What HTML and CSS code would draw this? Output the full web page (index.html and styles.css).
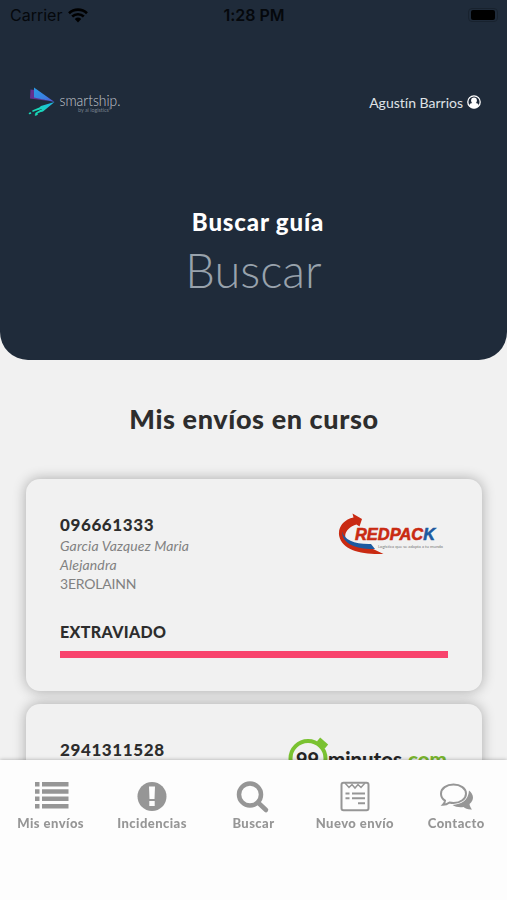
FILE: index.html
```html
<!DOCTYPE html>
<html lang="es">
  <head>
    <meta charset="UTF-8" />
    <meta name="viewport" content="width=device-width, initial-scale=1" />
    <title>Smartship</title>
    <link rel="stylesheet" href="styles.css">
  </head>
  <body>
    <header class="header">
      <div class="status-bar">
        <div class="carrier">
          <span>Carrier</span>
          <svg class="wifi" viewBox="0 0 20 15">
            <path d="M1 5.2a13 13 0 0 1 18 0" />
            <path d="M4.2 8.5a8.4 8.4 0 0 1 11.6 0" />
            <path class="wifi-dot" d="M6.8 11.1a4.7 4.7 0 0 1 6.4 0L10 14.4z" />
          </svg>
        </div>
        <span class="time">1:28 PM</span>
        <div class="battery"><span></span></div>
      </div>

      <div class="top-bar">
        <svg class="logo" viewBox="0 0 96 32">
          <defs>
            <linearGradient id="wing" x1="0" y1="0" x2="1" y2="1">
              <stop offset="0" stop-color="#2a9be6" />
              <stop offset="0.6" stop-color="#3b7fe0" />
              <stop offset="1" stop-color="#5a4fd0" />
            </linearGradient>
            <linearGradient id="tail" x1="0" y1="1" x2="1" y2="0">
              <stop offset="0" stop-color="#19e0b0" />
              <stop offset="1" stop-color="#1fb4ea" />
            </linearGradient>
          </defs>
          <path fill="#64308f" d="M3.5 3.5L8 4v7l14 4-19-2.5z" />
          <path fill="url(#wing)" d="M7 1.5L27.5 16 7 11.5z" />
          <path fill="url(#tail)" d="M27.5 16L16 25.5l-4 1 3-3.5-6 1.500 5-4.500z" />
          <path class="logo-trail" d="M12 22.500l-6 2.500M14 24.500l-5 3M3.500 27l-1 .5M10 28.300l-1.500.7" />
          <text class="logo-name" x="32.500" y="19.500" textLength="61" lengthAdjust="spacingAndGlyphs">smartship.</text>
          <text class="logo-sub" x="51" y="26" textLength="33" lengthAdjust="spacingAndGlyphs">by ai logistics°</text>
        </svg>
        <div class="user">
          <span>Agustín Barrios</span>
          <svg class="user-icon" viewBox="0 0 14 14">
            <circle class="ring" cx="7" cy="7" r="6.2" />
            <circle cx="7" cy="5.5" r="2.9" />
            <path d="M2.300 10.700c.3-2 1.700-2.500 3-2.600h3.400c1.300.1 2.700.6 3 2.600C10.500 12.600 9 13.200 7 13.200S3.500 12.600 2.300 10.700z" />
          </svg>
        </div>
      </div>

      <div class="search">
        <label class="search-label" for="guia">Buscar guía</label>
        <input class="search-input" id="guia" type="text" placeholder="Buscar" />
      </div>
    </header>

    <main class="shipments">
      <h1>Mis envíos en curso</h1>

      <article class="card">
        <div class="card-top">
          <div class="card-info">
            <h2>096661333</h2>
            <p class="person">Garcia Vazquez Maria<br />Alejandra</p>
            <p class="place">3EROLAINN</p>
          </div>
          <svg class="redpack" viewBox="0 0 112 44">
            <path fill="#c92a12" d="M14.500.5L24 6l-2.500 7.500-3-2C11 13.500 5 20 8 26c4 6 13 7 24 8.500l13.500 6.500C24 42 4 37 1.200 23-.5 14 6 6.500 15.500 4.500z" />
            <path fill="#1c5aa0" d="M4 18.500c2 8.500 13 13 29 12.500l4 5C20 36.500 4.500 32 4 18.500z" />
            <text class="redpack-name" x="17" y="27.300" textLength="80" lengthAdjust="spacingAndGlyphs">REDPAC<tspan class="redpack-k">K</tspan></text>
            <text class="redpack-sub" x="40" y="34.500" textLength="65" lengthAdjust="spacingAndGlyphs">Logística que se adapta a tu mundo</text>
          </svg>
        </div>
        <p class="status">EXTRAVIADO</p>
        <div class="progress"></div>
      </article>

      <article class="card">
        <div class="card-top">
          <div class="card-info">
            <h2>2941311528</h2>
          </div>
          <svg class="minutes" viewBox="0 0 160 44">
            <circle class="clock" cx="20" cy="20.500" r="17.500" />
            <path class="clock-button" d="M30.500 1.500l8 7" />
            <path class="clock-stem" d="M34.500 5l-3 3.500" />
            <text class="minutes-num" x="8" y="28.500" textLength="23" lengthAdjust="spacingAndGlyphs">99</text>
            <text class="minutes-name" x="40" y="28.500" textLength="74" lengthAdjust="spacingAndGlyphs">minutos</text>
            <text class="minutes-com" x="115" y="28.500" textLength="44" lengthAdjust="spacingAndGlyphs">.com</text>
          </svg>
        </div>
      </article>
    </main>

    <nav class="tabs">
      <a class="tab">
        <svg viewBox="0 0 36 32">
          <path d="M2 2h4.500v4.500H2zM9 2h26.500v4.500H9zM2 9.300h4.500v4.500H2zM9 9.300h26.500v4.500H9zM2 16.600h4.500v4.500H2zM9 16.600h26.500v4.500H9zM2 24h4.500v4.500H2zM9 24h26.500v4.500H9z" />
        </svg>
        <span>Mis envíos</span>
      </a>
      <a class="tab">
        <svg viewBox="0 0 36 32">
          <circle cx="18" cy="16.500" r="14.500" />
          <path class="cut" d="M15 6.500h6l-.5 12.500h-5zM15.300 21h5.400v5h-5.400z" />
        </svg>
        <span>Incidencias</span>
      </a>
      <a class="tab">
        <svg viewBox="0 0 36 32">
          <circle class="line thick" cx="15" cy="14.500" r="11" />
          <path class="line thick" d="M23 22.500l8 7.500" stroke-linecap="round" />
        </svg>
        <span>Buscar</span>
      </a>
      <a class="tab">
        <svg viewBox="0 0 36 32">
          <rect class="line" x="4.500" y="2.800" width="27" height="27.500" rx="2" />
          <path class="line thin" d="M8 3l4 4.500 3-3 3 3.500 3-3.500 3 3L28 3" />
          <path class="line" d="M8.500 13.500h4M15 13.500h13M8.500 18.200h4M15 18.200h13M21 23.200h7" />
        </svg>
        <span>Nuevo envío</span>
      </a>
      <a class="tab">
        <svg viewBox="0 0 36 32">
          <path d="M31 10.500c5 4 5.500 9.500.5 13.500.2 2 1.200 3.800 2.500 5.500-4 .3-6.500-.8-8.500-2.500-4 .6-8 0-11-2 9-.5 16-5 16.500-14.500z" />
          <path class="bubble" d="M15.500 4.500c7 0 12.500 4 12.500 9.200S22.500 23 15.500 23c-1.500 0-2.800-.2-4-.5-2 1.500-4 2.300-6.500 2.300 1.300-1.300 2-2.600 2-4.200C4.300 18.900 3 16.500 3 13.700 3 8.500 8.500 4.500 15.500 4.500z" />
        </svg>
        <span>Contacto</span>
      </a>
    </nav>
  </body>
</html>
```
FILE: styles.css
```css
* {
  box-sizing: border-box;
}

body {
  margin: 0;
  height: 900px;
  overflow: hidden;
  background: #f1f1f1;
  color: #2d2d2d;
  font-family: Lato, "Open Sans", sans-serif;
  font-variant-ligatures: none;
}

h1,
h2,
p {
  margin: 0;
}

.header {
  height: 360px;
  background: #1f2b3a;
  border-radius: 0 0 28px 28px;
  color: #fff;
}

/* barra de estado */
.status-bar {
  display: grid;
  grid-template-columns: 1fr auto 1fr;
  align-items: center;
  height: 30px;
  padding: 0 9px 0 10px;
  color: #05080c;
  font-family: Inter, sans-serif;
  font-size: 16px;
}

.carrier {
  display: flex;
  align-items: center;
  gap: 6px;
}

.wifi {
  width: 20px;
  height: 15px;
  fill: none;
  stroke: #000;
  stroke-width: 2.6;
}

.wifi-dot {
  fill: #000;
  stroke: none;
}

.time {
  font-weight: 600;
}

.battery {
  justify-self: end;
  width: 30px;
  height: 14px;
  padding: 1px 2px;
  border: 1px solid #18222e;
  border-radius: 4px;
}

.battery span {
  display: block;
  height: 10px;
  border-radius: 2px;
  background: #000;
}

.top-bar {
  display: flex;
  align-items: center;
  justify-content: space-between;
  height: 32px;
  margin-top: 56px;
  padding: 0 26px 0 27px;
}

.logo {
  width: 96px;
  height: 32px;
}

.logo-trail {
  fill: none;
  stroke: #19d8b8;
  stroke-width: 1.6;
  stroke-linecap: round;
}

.logo-name {
  fill: #c3c8ce;
  font-size: 15.5px;
  font-weight: 300;
}

.logo-sub {
  fill: #77818d;
  font-size: 5px;
}

.user {
  display: flex;
  align-items: center;
  gap: 4px;
  color: #dfe2e6;
  font-size: 14px;
}

.user-icon {
  width: 14px;
  height: 14px;
  fill: #fff;
}

.ring {
  fill: none;
  stroke: #fff;
  stroke-width: 1.3;
}

.search {
  display: flex;
  flex-direction: column;
  align-items: center;
  padding: 88px 0 0;
}

.search-label {
  padding-left: 9px;
  font-size: 24px;
  font-weight: 900;
  letter-spacing: 0.85px;
  line-height: 32px;
}

.search-input {
  width: 300px;
  height: 60px;
  margin-top: 2px;
  padding: 0;
  border: 0;
  background: none;
  color: #fff;
  font-family: inherit;
  font-size: 47px;
  font-weight: 300;
  text-align: center;
}

.search-input::placeholder {
  color: #98a2ac;
}

.shipments {
  padding: 39px 25px 0 26px;
}

.shipments h1 {
  margin-bottom: 41px;
  font-size: 27px;
  font-weight: 900;
  letter-spacing: 0.6px;
  line-height: 39px;
  text-align: center;
}

.card {
  height: 212px;
  margin-bottom: 13px;
  padding: 34px 34px 0;
  border-radius: 14px;
  background: #f1f1f1;
  box-shadow: 0 0 13px rgba(0, 0, 0, 0.3);
}

.card-top {
  display: flex;
  justify-content: space-between;
}

.card h2 {
  font-size: 17px;
  font-weight: 900;
  letter-spacing: 0.6px;
  line-height: 23px;
}

.person,
.place {
  color: #818181;
  font-size: 14px;
  line-height: 19px;
}

.person {
  font-style: italic;
  letter-spacing: 0.15px;
}

.place {
  letter-spacing: -0.2px;
}

.redpack {
  width: 112px;
  height: 44px;
  margin-right: -2px;
}

.redpack-name {
  fill: #c92a12;
  font-family: "Liberation Sans", sans-serif;
  font-size: 17px;
  font-style: italic;
  font-weight: bold;
  stroke: #c92a12;
  stroke-width: 0.6;
}

.redpack-k {
  fill: #1c5aa0;
  stroke: #1c5aa0;
}

.redpack-sub {
  fill: #777;
  font-size: 4.5px;
}

.status {
  margin-top: 27px;
  font-size: 16px;
  font-weight: 900;
  letter-spacing: 0.35px;
  line-height: 24px;
}

.progress {
  height: 7px;
  margin-top: 7px;
  background: #f8436d;
}

.minutes {
  width: 160px;
  height: 44px;
  overflow: visible;
}

.clock,
.clock-button,
.clock-stem {
  fill: none;
  stroke: #7ac231;
  stroke-width: 4;
}

.clock-button {
  stroke-width: 5;
}

.minutes-num,
.minutes-name,
.minutes-com {
  fill: #252525;
  font-size: 21px;
  font-weight: 900;
}

.minutes-com {
  fill: #7ab72f;
}

/* menú inferior */
.tabs {
  position: fixed;
  right: 0;
  bottom: 0;
  left: 0;
  display: grid;
  grid-template-columns: repeat(5, 1fr);
  height: 140px;
  padding-top: 20px;
  background: #fdfdfd;
  box-shadow: 0 0 4px rgba(0, 0, 0, 0.3);
}

.tab {
  display: flex;
  flex-direction: column;
  align-items: center;
  color: #969696;
  font-size: 13px;
  font-weight: 900;
  letter-spacing: 0.45px;
  line-height: 20px;
}

.tab svg {
  width: 36px;
  height: 32px;
  margin-bottom: 1px;
  fill: #969696;
  overflow: visible;
}

.tab .cut {
  fill: #fdfdfd;
}

.tab .line {
  fill: none;
  stroke: #969696;
  stroke-width: 2;
}

.tab .thick {
  stroke-width: 4.5;
}

.tab .thin {
  stroke-width: 1.5;
}

.tab .bubble {
  fill: #fdfdfd;
  stroke: #969696;
  stroke-width: 2;
}
```
